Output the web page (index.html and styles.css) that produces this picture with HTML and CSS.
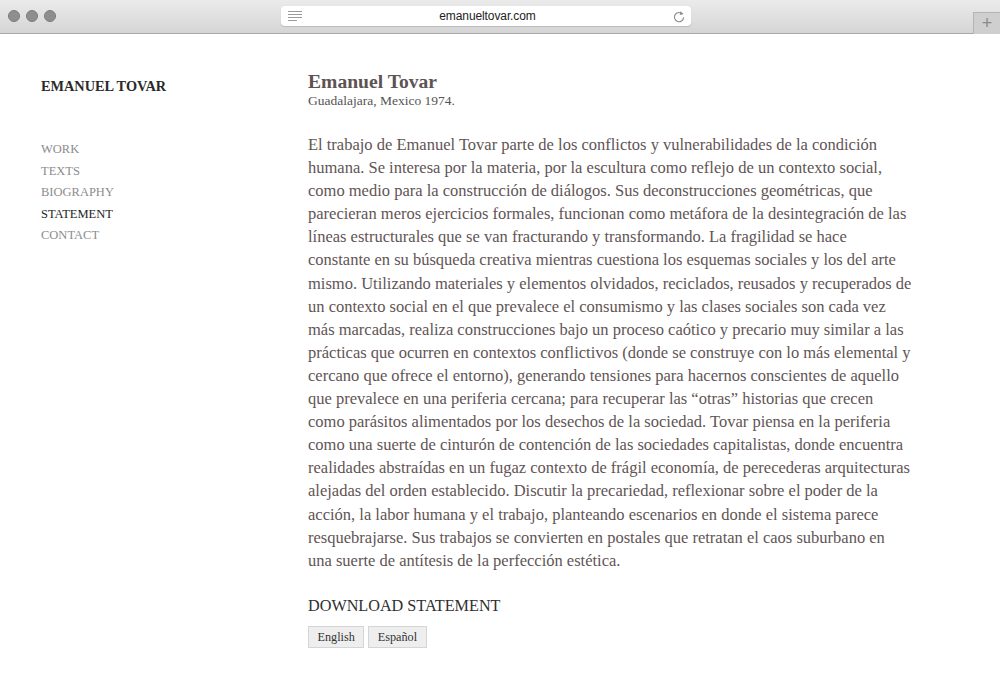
FILE: index.html
```html
<!DOCTYPE html>
<html lang="es">
<head>
<meta charset="utf-8">
<title>emanueltovar.com</title>
<link rel="stylesheet" href="styles.css">
</head>
<body>
<div class="chrome">
  <div class="lights"><span class="light"></span><span class="light"></span><span class="light"></span></div>
  <div class="urlbar">
    <svg class="reader" width="14" height="10" viewBox="0 0 14 10"><g stroke="#9a9a9a" stroke-width="1"><line x1="0" y1="0.5" x2="14" y2="0.5"/><line x1="0" y1="3.5" x2="14" y2="3.5"/><line x1="0" y1="6.5" x2="14" y2="6.5"/><line x1="0" y1="9.5" x2="9" y2="9.5"/></g></svg>
    <span class="url">emanueltovar.com</span>
    <svg class="reload" width="12" height="13" viewBox="0 0 12 13"><path d="M9.6 4.2 A4.6 4.6 0 1 0 10.6 7.4" fill="none" stroke="#8a8a8a" stroke-width="1.1"/><path d="M7.4 1.2 L10.4 3.9 L6.8 5.0 Z" fill="#8a8a8a"/></svg>
  </div>
  <div class="newtab">+</div>
</div>
<div class="page">
  <aside class="sidebar">
    <div class="brand">EMANUEL TOVAR</div>
    <nav class="nav">
      <a class="nav-item">WORK</a>
      <a class="nav-item">TEXTS</a>
      <a class="nav-item">BIOGRAPHY</a>
      <a class="nav-item active">STATEMENT</a>
      <a class="nav-item">CONTACT</a>
    </nav>
  </aside>
  <main class="main">
    <h1 class="name">Emanuel Tovar</h1>
    <div class="origin">Guadalajara, Mexico 1974.</div>
    <p class="statement">El trabajo de Emanuel Tovar parte de los conflictos y vulnerabilidades de la condición<br>
humana. Se interesa por la materia, por la escultura como reflejo de un contexto social,<br>
como medio para la construcción de diálogos. Sus deconstrucciones geométricas, que<br>
parecieran meros ejercicios formales, funcionan como metáfora de la desintegración de las<br>
líneas estructurales que se van fracturando y transformando. La fragilidad se hace<br>
constante en su búsqueda creativa mientras cuestiona los esquemas sociales y los del arte<br>
mismo. Utilizando materiales y elementos olvidados, reciclados, reusados y recuperados de<br>
un contexto social en el que prevalece el consumismo y las clases sociales son cada vez<br>
más marcadas, realiza construcciones bajo un proceso caótico y precario muy similar a las<br>
prácticas que ocurren en contextos conflictivos (donde se construye con lo más elemental y<br>
cercano que ofrece el entorno), generando tensiones para hacernos conscientes de aquello<br>
que prevalece en una periferia cercana; para recuperar las “otras” historias que crecen<br>
como parásitos alimentados por los desechos de la sociedad. Tovar piensa en la periferia<br>
como una suerte de cinturón de contención de las sociedades capitalistas, donde encuentra<br>
realidades abstraídas en un fugaz contexto de frágil economía, de perecederas arquitecturas<br>
alejadas del orden establecido. Discutir la precariedad, reflexionar sobre el poder de la<br>
acción, la labor humana y el trabajo, planteando escenarios en donde el sistema parece<br>
resquebrajarse. Sus trabajos se convierten en postales que retratan el caos suburbano en<br>
una suerte de antítesis de la perfección estética.</p>
    <h2 class="download">DOWNLOAD STATEMENT</h2>
    <div class="buttons">
      <a class="btn">English</a>
      <a class="btn">Español</a>
    </div>
  </main>
</div>
</body>
</html>
```
FILE: styles.css
```css
html, body {
  margin: 0;
  padding: 0;
  background: #fff;
}
body {
  width: 1000px;
  height: 700px;
  overflow: hidden;
  font-family: "Liberation Serif", "Times New Roman", serif;
}
.chrome {
  height: 33px;
  border-bottom: 1px solid #a9a9a9;
  background: linear-gradient(#ebebeb, #d6d5d6);
  display: flex;
  align-items: flex-start;
  position: relative;
}
.lights {
  display: flex;
  gap: 6px;
  padding: 10px 0 0 8px;
}
.light {
  width: 12px;
  height: 12px;
  border-radius: 50%;
  background: #8e8e8e;
  border: 0.5px solid #7c7c7c;
  box-sizing: border-box;
}
.urlbar {
  margin: 6px 0 0 225px;
  width: 410px;
  height: 20px;
  background: #fff;
  border-radius: 4px;
  box-shadow: 0 1px 1px rgba(0,0,0,0.15);
  display: flex;
  align-items: center;
  padding: 0 6px 0 7px;
  box-sizing: border-box;
}
.reader { flex: none; }
.url {
  flex: 1;
  text-align: center;
  font-family: "Liberation Sans", Arial, sans-serif;
  font-size: 12px;
  color: #222;
  letter-spacing: -0.1px;
}
.reload { flex: none; }
.newtab {
  position: absolute;
  right: 0;
  top: 12px;
  width: 26px;
  height: 21px;
  background: #cfcfcf;
  border-left: 1px solid #b4b4b4;
  border-top: 1px solid #b4b4b4;
  font-family: "Liberation Sans", Arial, sans-serif;
  font-size: 18px;
  font-weight: 300;
  line-height: 20px;
  text-align: center;
  color: #8a8a8a;
}
.page {
  display: flex;
  padding: 37px 0 0 41px;
}
.sidebar {
  width: 267px;
  flex: none;
}
.brand {
  font-size: 14.3px;
  font-weight: bold;
  color: #2a2a2a;
  line-height: 18px;
  margin-top: 6px;
}
.nav {
  display: flex;
  flex-direction: column;
  margin-top: 44px;
}
.nav-item {
  font-size: 12.5px;
  letter-spacing: 0;
  line-height: 21.5px;
  color: #8c8c8c;
}
.nav-item.active {
  color: #1e1e1e;
}
.main {
  width: 650px;
  color: #5f5555;
}
.name {
  margin: 0;
  font-size: 19.6px;
  font-weight: bold;
  line-height: 22px;
  color: #5d5353;
}
.origin {
  font-size: 13.5px;
  line-height: 16px;
  color: #555;
}
.statement {
  margin: 24px 0 0;
  font-size: 16.5px;
  line-height: 23.1px;
}
.download {
  margin: 24px 0 0;
  font-size: 16.2px;
  font-weight: normal;
  color: #2f2f2f;
  line-height: 20px;
}
.buttons {
  display: flex;
  gap: 4px;
  margin-top: 10px;
}
.btn {
  font-size: 12.2px;
  color: #333;
  background: #eeeeee;
  border: 1px solid #d5d5d5;
  padding: 0 8.5px;
  line-height: 20px;
}
```
